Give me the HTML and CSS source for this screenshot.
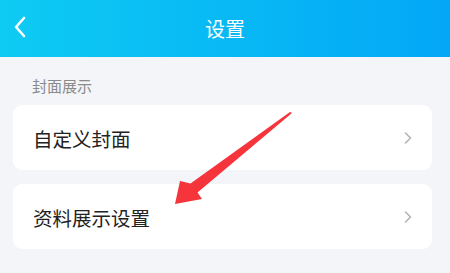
FILE: index.html
```html
<!DOCTYPE html>
<html>
<head lang="zh">
    <meta charset="UTF-8">
    <title>设置</title>
    <link rel="stylesheet" href="styles.css">
</head>
<body>
<div class="page">
    <div class="header">
        <svg class="back" width="14" height="24" viewBox="0 0 14 24">
            <path d="M11 3 L3 12 L11 21" fill="none" stroke="#fff" stroke-width="2.6" stroke-linecap="round" stroke-linejoin="round"/>
        </svg>
        <span class="title">设置</span>
    </div>
    <div class="group_title">封面展示</div>
    <div class="cell">
        <span class="cell_text">自定义封面</span>
        <svg class="more" width="10" height="14" viewBox="0 0 10 14">
            <path d="M2.5 2 L7.5 7 L2.5 12" fill="none" stroke="#b3b3b3" stroke-width="1.6" stroke-linecap="round" stroke-linejoin="round"/>
        </svg>
    </div>
    <div class="cell">
        <span class="cell_text">资料展示设置</span>
        <svg class="more" width="10" height="14" viewBox="0 0 10 14">
            <path d="M2.5 2 L7.5 7 L2.5 12" fill="none" stroke="#b3b3b3" stroke-width="1.6" stroke-linecap="round" stroke-linejoin="round"/>
        </svg>
    </div>
    <!-- 标注箭头 -->
    <svg class="arrow" width="450" height="273" viewBox="0 0 450 273">
        <polygon points="292,113 197.5,192.5 202,199 175,204 180,181 190.5,183.5 290,112" fill="#f5343b"/>
    </svg>
</div>
</body>
</html>
```

FILE: styles.css
```css
* {
    margin: 0;
    padding: 0;
}

body {
    background: #f3f5f8;
    font-family: "Noto Sans CJK SC", "Noto Sans", sans-serif;
}

.page {
    position: relative;
    width: 450px;
    height: 273px;
    overflow: hidden;
}

.header {
    position: relative;
    height: 57px;
    display: flex;
    align-items: center;
    justify-content: center;
    background: linear-gradient(90deg, #0ecbf3, #03a7f6);
}

.back {
    position: absolute;
    left: 13px;
    top: 15px;
}

.title {
    color: #fff;
    font-size: 20px;
    line-height: 24px;
    margin-top: 1px;
}

.group_title {
    padding: 18px 0 0 32px;
    margin-bottom: 8px;
    font-size: 15px;
    line-height: 22px;
    color: #8a8a8a;
}

.cell {
    display: flex;
    align-items: center;
    justify-content: space-between;
    width: 419px;
    height: 65px;
    margin: 0 0 14px 13px;
    padding: 0 19px 0 20px;
    box-sizing: border-box;
    background: #fff;
    border-radius: 9px;
}

.cell_text {
    font-size: 19.5px;
    line-height: 24px;
    color: #222;
    margin-top: 2px;
}

.arrow {
    position: absolute;
    left: 0;
    top: 0;
}
```
